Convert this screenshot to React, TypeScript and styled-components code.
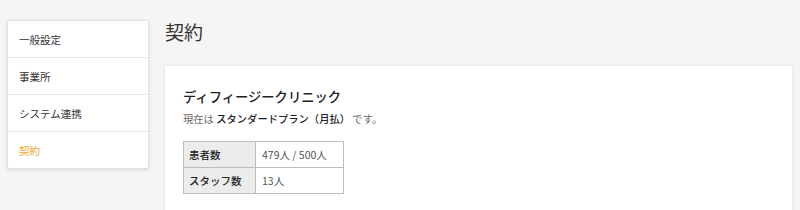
import React from "react";
import styled, { createGlobalStyle } from "styled-components";

const GlobalStyle = createGlobalStyle`
  body {
    margin: 0;
    background-color: #f5f5f5;
    font-family: "Noto Sans CJK JP", "Noto Sans", sans-serif;
    color: #333;
  }
`;

const Page = styled.div`
  display: flex;
  align-items: flex-start;
  gap: 16px;
  padding: 20px 8px 0 7px;
  height: 210px;
  box-sizing: border-box;
  overflow: hidden;
`;

const SideMenu = styled.ul`
  flex: 0 0 140px;
  margin: 0;
  padding: 0;
  list-style: none;
  background-color: #fff;
  border: 1px solid #e2e2e2;
  border-radius: 2px;
  box-shadow: 0 1px 3px rgba(0, 0, 0, 0.12);
`;

const MenuItem = styled.li<{ $active?: boolean }>`
  height: 36px;
  display: flex;
  align-items: center;
  padding: 0 11px;
  font-size: 10.5px;
  color: ${(p) => (p.$active ? "#f5a623" : "#333")};
  border-top: 1px solid #e6e6e6;
  &:first-child {
    border-top: none;
  }
`;

const Main = styled.div`
  flex: 1;
  display: flex;
  flex-direction: column;
`;

const Title = styled.h1`
  margin: 0;
  height: 46px;
  display: flex;
  align-items: flex-start;
  font-size: 19px;
  font-weight: 400;
  line-height: 24px;
  color: #333;
`;

const Card = styled.div`
  background-color: #fff;
  box-shadow: 0 0 4px rgba(0, 0, 0, 0.1);
  padding: 20px 18px 40px;
`;

const ClinicName = styled.h2`
  margin: 0;
  font-size: 13.3px;
  font-weight: 500;
  line-height: 22px;
  color: #222;
`;

const PlanText = styled.p`
  margin: 1px 0 12px;
  font-size: 10.3px;
  line-height: 20px;
  color: #666;
  strong {
    font-weight: 500;
    color: #222;
  }
`;

const Table = styled.table`
  border-collapse: collapse;
  table-layout: fixed;
  width: 161px;
  font-size: 10.5px;
  th,
  td {
    border: 1px solid #bdbdbd;
    height: 25px;
    padding: 0 4px 0 5px;
    text-align: left;
    white-space: nowrap;
  }
  th {
    width: 62px;
    background-color: #ececec;
    font-weight: 500;
    color: #222;
  }
  td {
    padding-left: 6px;
    color: #555;
  }
`;

const menu = ["一般設定", "事業所", "システム連携", "契約"];

export default function App() {
  return (
    <>
      <GlobalStyle />
      <Page>
        <SideMenu>
          {menu.map((m) => (
            <MenuItem key={m} $active={m === "契約"}>
              {m}
            </MenuItem>
          ))}
        </SideMenu>
        <Main>
          <Title>契約</Title>
          <Card>
            <ClinicName>ディフィージークリニック</ClinicName>
            <PlanText>
              現在は <strong>スタンダードプラン（月払）</strong> です。
            </PlanText>
            <Table>
              <tbody>
                <tr>
                  <th>患者数</th>
                  <td>479人 / 500人</td>
                </tr>
                <tr>
                  <th>スタッフ数</th>
                  <td>13人</td>
                </tr>
              </tbody>
            </Table>
          </Card>
        </Main>
      </Page>
    </>
  );
}
